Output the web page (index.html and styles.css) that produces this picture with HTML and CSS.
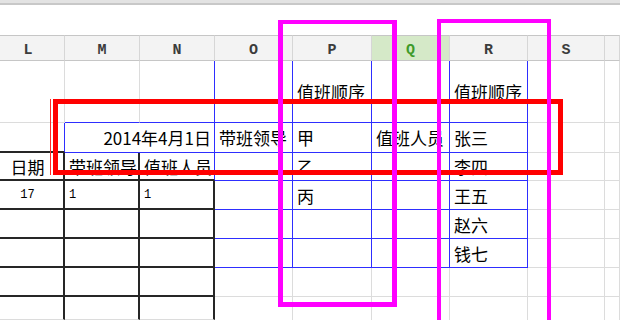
FILE: index.html
```html
<!DOCTYPE html>
<html lang="zh-CN">
<head>
<meta charset="utf-8">
<title>值班表</title>
<link rel="stylesheet" href="styles.css">
</head>
<body>
<div class="top"></div>
<div class="gap"></div>
<div class="sheet">
  <div class="h first">L</div><div class="h">M</div><div class="h">N</div><div class="h">O</div><div class="h">P</div><div class="h sel">Q</div><div class="h">R</div><div class="h">S</div><div class="h"></div>

  <div class="c"></div>
  <div class="c bb"></div>
  <div class="c rb bb"></div>
  <div class="c rb bb"></div>
  <div class="c rb bb">值班顺序</div>
  <div class="c rb bb"></div>
  <div class="c rb bb">值班顺序</div>
  <div class="c"></div>
  <div class="c"></div>

  <div class="c rb bk"></div>
  <div class="c rb bb span2 right">2014年4月1日</div>
  <div class="c rb bb">带班领导</div>
  <div class="c rb bb">甲</div>
  <div class="c rb bb">值班人员</div>
  <div class="c rb bb">张三</div>
  <div class="c"></div>
  <div class="c"></div>

  <div class="c rk bk center">日期</div>
  <div class="c rk bk">带班领导</div>
  <div class="c rb bk">值班人员</div>
  <div class="c rb bb"></div>
  <div class="c rb bb">乙</div>
  <div class="c rb bb"></div>
  <div class="c rb bb">李四</div>
  <div class="c"></div>
  <div class="c"></div>

  <div class="c rk bk center num">17</div>
  <div class="c rk bk num">1</div>
  <div class="c rk bk num">1</div>
  <div class="c rb bb"></div>
  <div class="c rb bb">丙</div>
  <div class="c rb bb"></div>
  <div class="c rb bb">王五</div>
  <div class="c"></div>
  <div class="c"></div>

  <div class="c rk bk"></div>
  <div class="c rk bk"></div>
  <div class="c rk bk"></div>
  <div class="c rb bb"></div>
  <div class="c rb bb"></div>
  <div class="c rb bb"></div>
  <div class="c rb bb">赵六</div>
  <div class="c"></div>
  <div class="c"></div>

  <div class="c rk bk"></div>
  <div class="c rk bk"></div>
  <div class="c rk bk"></div>
  <div class="c rb bb"></div>
  <div class="c rb bb"></div>
  <div class="c rb bb"></div>
  <div class="c rb bb">钱七</div>
  <div class="c"></div>
  <div class="c"></div>

  <div class="c rk bk"></div>
  <div class="c rk bk"></div>
  <div class="c rk bk"></div>
  <div class="c"></div>
  <div class="c"></div>
  <div class="c"></div>
  <div class="c"></div>
  <div class="c"></div>
  <div class="c"></div>

  <div class="c rk"></div>
  <div class="c rk"></div>
  <div class="c rk"></div>
  <div class="c nb"></div>
  <div class="c nb"></div>
  <div class="c nb"></div>
  <div class="c nb"></div>
  <div class="c nb"></div>
  <div class="c nb"></div>
</div>
<div class="mark red-thin"></div>
<div class="mark red-box"></div>
<div class="mark mag1"></div>
<div class="mark mag2"></div>
</body>
</html>
```
FILE: styles.css
```css
html, body {
  margin: 0;
  padding: 0;
  background: #fff;
  overflow: hidden;
}
body {
  width: 620px;
  height: 320px;
  position: relative;
  font-family: "Noto Sans CJK SC", "Noto Sans", sans-serif;
}
.top {
  height: 3px;
  background: #e3e3e3;
  border-bottom: 2px solid #c8c8c8;
}
.gap {
  height: 30px;
}
.sheet {
  display: grid;
  grid-template-columns: 65px 75px 75px 78px 79px 78px 78px 77px 15px;
  grid-template-rows: 26px 62px 30px 28px 29px 29px 29px 29px 23px;
  width: 620px;
}
.h {
  box-sizing: border-box;
  background: #f3f3f3;
  border-top: 1px solid #c6c6c6;
  border-bottom: 1px solid #c6c6c6;
  border-right: 1px solid #d6d6d6;
  font: bold 15px "Liberation Mono", monospace;
  color: #3c3c3c;
  display: flex;
  justify-content: center;
  align-items: center;
  padding-top: 4px;
}
.h.first {
  padding-right: 8px;
}
.h.sel {
  background: #d5e9c8;
  color: #3e9b2b;
}
.c {
  box-sizing: border-box;
  border-right: 1px solid #dcdcdc;
  border-bottom: 1px solid #dcdcdc;
  display: flex;
  align-items: center;
  padding-left: 4px;
  white-space: nowrap;
  font-size: 17px;
  line-height: 1;
  color: #000;
}
.rb { border-right-color: #2e2eff; }
.bb { border-bottom-color: #2e2eff; }
.rk { border-right: 2px solid #262626; }
.bk { border-bottom: 2px solid #262626; }
.nb { border-bottom: 0; }
.right {
  justify-content: flex-end;
  padding-right: 3px;
}
.center {
  justify-content: center;
  padding-left: 0;
  padding-right: 8px;
}
.num {
  font: 12px "Liberation Mono", monospace;
}
.span2 {
  grid-column: span 2;
}
.mark {
  position: absolute;
  box-sizing: border-box;
  pointer-events: none;
}
.red-thin {
  left: 50px;
  top: 99px;
  width: 1px;
  height: 76px;
  background: #ff2a2a;
}
.red-box {
  left: 53px;
  top: 99px;
  width: 510px;
  height: 76px;
  border: 5px solid #ff0000;
}
.mag1 {
  left: 278px;
  top: 20px;
  width: 119px;
  height: 287px;
  border: 5px solid #ff00ff;
  border-top-width: 4px;
}
.mag2 {
  left: 437px;
  top: 19px;
  width: 114px;
  height: 301px;
  border: 4px solid #ff00ff;
  border-bottom: 0;
}
```
